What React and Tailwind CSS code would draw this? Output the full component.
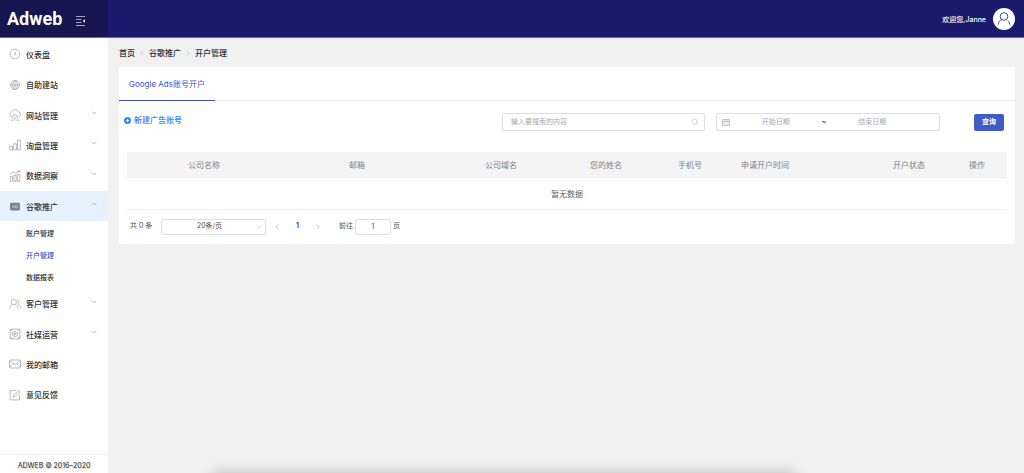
import {
  ChevronDown,
  ChevronUp,
  ChevronLeft,
  ChevronRight,
  Search,
} from "lucide-react";

const iconPaths = {
  dashboard: (
    <>
      <circle cx="8" cy="8" r="6.5" />
      <path d="M8 5v5M7 8h2" />
    </>
  ),
  site: (
    <>
      <circle cx="8" cy="8" r="6" />
      <ellipse cx="8" cy="8" rx="3" ry="6" />
      <path d="M8 2v12M2 8h12" />
    </>
  ),
  cloud: (
    <>
      <path d="M4 10.500a3 3 0 0 1-.8-5.800A4.800 4.800 0 0 1 12.400 4a3.400 3.400 0 0 1 .6 6.500" />
      <path d="M5 13.500V9.500l3-2.500 3 2.500v4M8 10v5M3 15h3M10 15h3.500" />
    </>
  ),
  bars: (
    <>
      <rect x="1" y="10" width="3.500" height="4.500" />
      <rect x="6.200" y="6.500" width="3.500" height="8" />
      <rect x="11.500" y="1.500" width="3.500" height="13" />
    </>
  ),
  insight: (
    <>
      <rect x="1.500" y="9" width="3" height="6" />
      <rect x="6.500" y="7" width="3" height="8" />
      <rect x="11.500" y="6" width="3" height="9" />
      <path d="M1 6l4-3.500 4 2L14.500 1M11.500 1h3v3" />
    </>
  ),
  users: (
    <>
      <circle cx="6.500" cy="5.500" r="3.500" />
      <path d="M.8 14.500c0-3 2-5 4-5.500M8.500 9c2 .5 3.500 2.500 3.500 5.500M10.500 2a3.300 3.300 0 0 1 1.500 6c2 .8 3.300 2.800 3.300 5.500" />
    </>
  ),
  media: (
    <>
      <rect x="1.500" y="1.500" width="13" height="13" />
      <circle cx="8" cy="8" r="3.500" />
      <path d="M7 6.300 9.700 8 7 9.700zM1.500 5 5 1.500M11 1.500 14.500 5M1.500 11 5 14.500M11 14.500l3.500-3.500" />
    </>
  ),
  mail: (
    <>
      <rect x=".7" y="2.700" width="14.600" height="10.600" rx="1" />
      <path d="M1 3.500 8 9l7-5.500M1 12.500l4.500-5M15 12.500l-4.500-5" />
    </>
  ),
  feedback: (
    <>
      <path d="M9 2H1.500v12.500H14V8" />
      <path d="M5.500 11l.8-3L13 1.500l2 2L8.300 10z" />
    </>
  ),
};

function MenuIcon({ name }) {
  if (name === "ads") {
    return (
      <svg viewBox="0 0 16 16" className="size-3 shrink-0" aria-hidden="true">
        <rect x="1.500" y="3.500" width="13" height="10.500" rx="1.500" fill="#7b8088" />
        <path
          d="M4.500 10.500 6 7l1.500 3.500M9 7v3.500h.8c2.400 0 2.400-3.500 0-3.500z"
          fill="none"
          stroke="#d5dbe3"
        />
      </svg>
    );
  }
  return (
    <svg
      viewBox="0 0 16 16"
      fill="none"
      stroke="#a3a5aa"
      strokeWidth="1"
      className="size-3 shrink-0"
      aria-hidden="true"
    >
      {iconPaths[name]}
    </svg>
  );
}

const menu = [
  { label: "仪表盘", icon: "dashboard" },
  { label: "自助建站", icon: "site" },
  { label: "网站管理", icon: "cloud", expandable: true },
  { label: "询盘管理", icon: "bars", expandable: true },
  { label: "数据洞察", icon: "insight", expandable: true },
  {
    label: "谷歌推广",
    icon: "ads",
    expandable: true,
    children: ["账户管理", "开户管理", "数据报表"],
  },
  { label: "客户管理", icon: "users", expandable: true },
  { label: "社媒运营", icon: "media", expandable: true },
  { label: "我的邮箱", icon: "mail" },
  { label: "意见反馈", icon: "feedback" },
];

const columns = [
  { label: "公司名称", className: "w-[154px]" },
  { label: "邮箱", className: "w-[152px]" },
  { label: "公司域名", className: "w-[136px]" },
  { label: "您的姓名", className: "w-[74px]" },
  { label: "手机号", className: "w-[94px]" },
  { label: "申请开户时间", className: "w-[134px] pl-1 text-left" },
  { label: "开户状态", className: "w-[76px]" },
  { label: "操作", className: "w-[60px]" },
];

function MenuLink({ item }) {
  const Arrow = item.children ? ChevronUp : ChevronDown;
  return (
    <a
      href="#"
      className={`flex flex-1 items-center gap-[5px] pr-[10px] pl-[9px] text-[#303133] ${
        item.children ? "bg-[#e6f1fe]" : ""
      }`}
    >
      <MenuIcon name={item.icon} />
      <span className="flex-1 pt-px text-[8px] font-medium">{item.label}</span>
      {item.expandable && (
        <Arrow className="mb-1 size-2 text-[#a3a5aa]" strokeWidth={2} />
      )}
    </a>
  );
}

function Sidebar() {
  return (
    <aside className="flex w-[108px] shrink-0 flex-col bg-white">
      <nav className="flex h-[372px] flex-col pt-px">
        {menu.map((item) => (
          <div key={item.label} className="contents">
            <MenuLink item={item} />
            {item.children && (
              <div className="flex flex-col pt-px">
                {item.children.map((child) => (
                  <a
                    key={child}
                    href="#"
                    className={`flex h-[22px] items-center pt-px pl-[26px] text-[7px] font-medium ${
                      child === "开户管理" ? "text-[#3f51c5]" : "text-[#303133]"
                    }`}
                  >
                    {child}
                  </a>
                ))}
              </div>
            )}
          </div>
        ))}
      </nav>
      <footer className="mt-auto flex h-[19px] items-center justify-center border-t border-[#f0f0f0] pt-1 text-[7px] text-[#303133] text-shadow-[1px_1px_1px_#c9b8a8]">
        ADWEB © 2016–2020
      </footer>
    </aside>
  );
}

function Header() {
  return (
    <header className="flex h-[38px] shrink-0 border-b border-[#6a6a9c] bg-[#1b1b6d] text-white">
      <div className="flex w-[108px] items-center gap-[14px] bg-[#161650] pl-[7px]">
        <a
          href="#"
          className="font-['Roboto',sans-serif] text-[18px] leading-none font-bold"
        >
          Adweb
        </a>
        <button type="button" aria-label="收起菜单" className="mt-1">
          <svg viewBox="0 0 10 10" className="size-[10px]" stroke="#a5a5c4" fill="none">
            <path d="M0 .5h9M0 3.500h5.500M0 6.500h5.500M0 9.500h9" />
            <path d="M9 3.200v3.600L6.800 5z" fill="#fff" stroke="none" />
          </svg>
        </button>
      </div>
      <div className="flex flex-1 items-center justify-end gap-[7px] pr-[9px]">
        <span className="pt-1 text-[7px] font-medium">欢迎您,Janne</span>
        <button
          type="button"
          aria-label="用户"
          className="flex size-[22px] items-center justify-center rounded-full bg-white"
        >
          <svg viewBox="0 0 22 22" className="size-[22px]" fill="none" stroke="#3a469c">
            <circle cx="11" cy="8.500" r="3.800" />
            <path d="M5.200 16.500c.3-2.600 1.700-4.300 3.600-5M16.800 16.500c-.2-1.300-.8-2.400-1.700-3.300" />
          </svg>
        </button>
      </div>
    </header>
  );
}

function Toolbar() {
  return (
    <div className="flex items-start pt-3 pr-[11px] pl-[5px]">
      <button
        type="button"
        className="flex items-center gap-[3px] pt-px text-[8px] font-medium text-[#2d86fa]"
      >
        <svg viewBox="0 0 8 8" className="size-[7px]">
          <circle cx="4" cy="4" r="4" fill="#2d86fa" />
          <path d="M2.200 4h3.600M4 2.200v3.600" stroke="#fff" />
        </svg>
        新建广告账号
      </button>
      <form className="ml-auto flex items-center text-[7px] text-[#c0c4cc]">
        <label className="flex h-[18px] w-[203px] items-center rounded-xs border border-[#dcdfe6] pr-[5px] pl-2">
          <input
            type="text"
            aria-label="搜索"
            placeholder="输入要搜索的内容"
            className="min-w-0 flex-1 outline-none placeholder:text-[#a5a9b4]"
          />
          <Search className="size-2" />
        </label>
        <div className="ml-[11px] flex h-[18px] w-[224px] items-center rounded-xs border border-[#dcdfe6] px-[5px]">
          <svg viewBox="0 0 8 8" className="size-2" fill="#eceef2" stroke="#c0c4cc">
            <path d="M.5 1.500h7v6h-7zM.5 3.500h7" />
          </svg>
          <input
            type="text"
            aria-label="开始日期"
            placeholder="开始日期"
            className="min-w-0 flex-1 text-center outline-none placeholder:text-[#a5a9b4]"
          />
          <span className="text-[#303133]">~</span>
          <input
            type="text"
            aria-label="结束日期"
            placeholder="结束日期"
            className="min-w-0 flex-1 text-center outline-none placeholder:text-[#a5a9b4]"
          />
          <span className="w-4" />
        </div>
        <button
          type="button"
          className="ml-[34px] h-[17px] w-[30px] rounded-xs bg-[#3f5bc4] font-bold text-white"
        >
          查询
        </button>
      </form>
    </div>
  );
}

function AccountTable() {
  return (
    <table className="w-full table-fixed text-center text-[8px] text-[#7f8287]">
      <thead>
        <tr className="h-[25px] border-b border-[#ebeef5] bg-[#f4f4f4]">
          {columns.map((col) => (
            <th
              key={col.label}
              className={`pt-px font-normal whitespace-nowrap ${col.className}`}
            >
              {col.label}
            </th>
          ))}
        </tr>
      </thead>
      <tbody>
        <tr className="h-8 border-b border-[#ebeef5] text-[#606266]">
          <td colSpan={columns.length} className="pt-px">
            暂无数据
          </td>
        </tr>
      </tbody>
    </table>
  );
}

function Pagination() {
  return (
    <div className="flex h-[34px] items-center pl-[3px] text-[7px] text-[#505256]">
      <span className="w-[23px] whitespace-nowrap">共 0 条</span>
      <div className="relative ml-2">
        <select
          aria-label="每页条数"
          className="h-4 w-[105px] appearance-none rounded-xs border border-[#dcdfe6] pr-2 text-center"
        >
          <option>20条/页</option>
        </select>
        <ChevronDown className="pointer-events-none absolute top-1 right-[3px] size-2 text-[#c0c4cc]" />
      </div>
      <button type="button" aria-label="上一页" className="ml-[7px]">
        <ChevronLeft className="size-2 text-[#a8abb2]" />
      </button>
      <button type="button" className="mx-[15px] font-bold text-[#3f51c5]">
        1
      </button>
      <button type="button" aria-label="下一页">
        <ChevronRight className="size-2 text-[#a8abb2]" />
      </button>
      <label className="ml-[17px] flex items-center gap-[2px]">
        前往
        <input
          type="text"
          defaultValue="1"
          className="h-4 w-9 rounded-xs border border-[#dcdfe6] text-center"
        />
        页
      </label>
    </div>
  );
}

export default function App() {
  return (
    <div className="relative flex min-h-screen flex-col overflow-hidden bg-[#f1f1f1] font-['Inter','Noto_Sans_CJK_SC',sans-serif]">
      <Header />
      <div className="flex flex-1">
        <Sidebar />
        <main className="min-w-0 flex-1 pr-[9px] pl-[11px]">
          <nav
            className="flex h-[29px] items-center gap-[3px] text-[8px] font-medium text-[#303133]"
            aria-label="面包屑"
          >
            <a href="#">首页</a>
            <ChevronRight className="size-2 text-[#c0c4cc]" />
            <a href="#">谷歌推广</a>
            <ChevronRight className="size-2 text-[#c0c4cc]" />
            <span>开户管理</span>
          </nav>
          <section className="bg-white">
            <div className="flex h-[34px] border-b border-[#ebebeb]">
              <button
                type="button"
                className="-mb-px border-b border-[#3f51c5] px-[10px] text-[8px] text-[#3f51c5]"
              >
                Google Ads账号开户
              </button>
            </div>
            <Toolbar />
            <div className="px-2 pt-[21px]">
              <AccountTable />
              <Pagination />
            </div>
          </section>
        </main>
      </div>
      <div className="pointer-events-none absolute top-full right-[230px] left-[214px] h-4 shadow-[0_0_14px_rgba(0,0,0,0.25)]" />
    </div>
  );
}
